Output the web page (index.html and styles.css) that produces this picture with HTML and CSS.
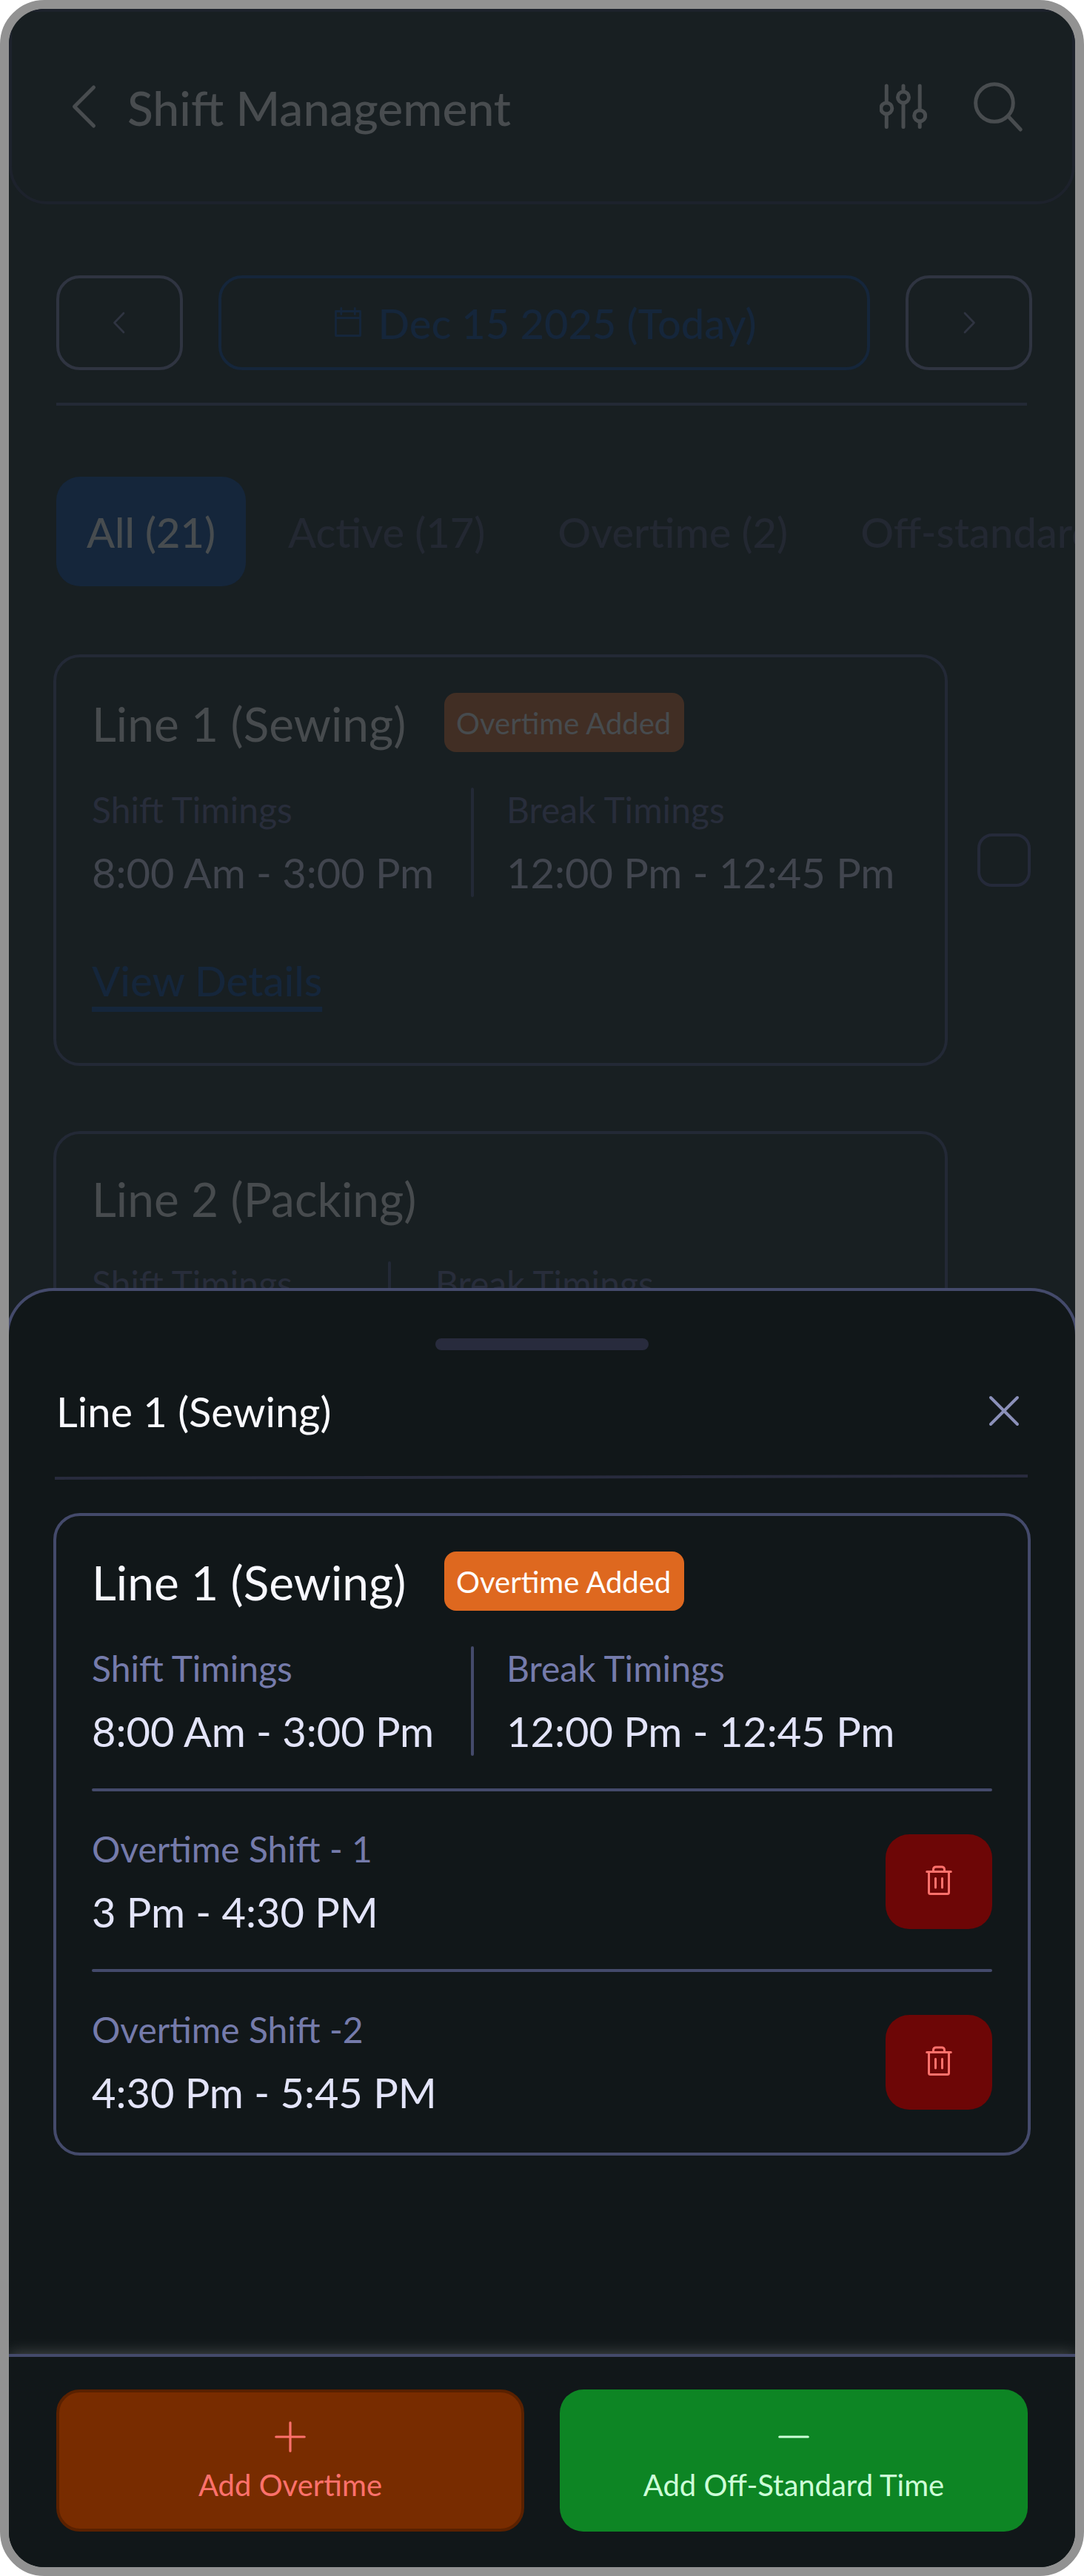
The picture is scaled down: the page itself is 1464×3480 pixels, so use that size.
FILE: index.html
```html
<!DOCTYPE html>
<html lang="en">
<head>
<meta charset="utf-8">
<title>Shift Management</title>
<link rel="stylesheet" href="styles.css">
</head>
<body>
<div class="phone">
  <header class="header">
    <svg class="back" viewBox="0 0 64 64"><path d="M44.5 6 18.5 32 44.5 58"/></svg>
    <h1 class="t64 header-title">Shift Management</h1>
    <svg class="filters" viewBox="0 0 64 64">
      <path d="M9.3 4v21M9.3 42v17.500M32 4v5.500M32 27v32.500M54.200 4v31M54.200 52v7.500"/>
      <circle cx="9.300" cy="34.400" r="7.500"/><circle cx="32" cy="19.400" r="7.500"/><circle cx="54.200" cy="44.400" r="7.500"/>
    </svg>
    <svg class="search" viewBox="0 0 72 72"><circle cx="31" cy="31" r="25.300"/><path d="M49.500 49 66.300 67"/></svg>
  </header>

  <main class="main">
    <div class="dates">
      <button class="step"><svg viewBox="0 0 32 32"><path d="M21 3 8.500 16 21 29"/></svg></button>
      <button class="today">
        <svg viewBox="0 0 40 44"><path d="M2.500 6.500h33v33h-33zM2.500 15.500h33M9.800 2.500v8M28.300 2.500v8"/></svg>
        <span class="t56">Dec 15 2025 (Today)</span>
      </button>
      <button class="step"><svg viewBox="0 0 32 32"><path d="M10 3 22.500 16 10 29"/></svg></button>
    </div>
    <hr class="rule">
    <nav class="tabs">
      <a class="tab tab-on"><span class="t56">All (21)</span></a>
      <a class="tab"><span class="t56">Active (17)</span></a>
      <a class="tab"><span class="t56">Overtime (2)</span></a>
      <a class="tab"><span class="t56">Off-standard (2)</span></a>
    </nav>
    <div class="list">
      <div class="line">
        <section class="card card-dim">
          <div class="card-head"><h2 class="t64">Line 1 (Sewing)</h2><span class="badge"><span class="t40">Overtime Added</span></span></div>
          <div class="times">
            <div class="slot"><span class="label t48">Shift Timings</span><span class="value t56">8:00 Am - 3:00 Pm</span></div>
            <i class="bar"></i>
            <div class="slot"><span class="label t48">Break Timings</span><span class="value t56">12:00 Pm - 12:45 Pm</span></div>
          </div>
          <a class="details"><span class="t56">View Details</span></a>
        </section>
        <i class="check"></i>
      </div>
      <div class="line">
        <section class="card card-dim">
          <div class="card-head"><h2 class="t64">Line 2 (Packing)</h2></div>
          <div class="times times-short">
            <div class="slot"><span class="label t48">Shift Timings</span></div>
            <i class="bar"></i>
            <div class="slot"><span class="label t48">Break Timings</span></div>
          </div>
        </section>
      </div>
    </div>
  </main>

  <div class="sheet">
    <i class="handle"></i>
    <div class="sheet-head">
      <h2 class="t56">Line 1 (Sewing)</h2>
      <svg class="close" viewBox="0 0 48 48"><path d="M6 6 42 42M42 6 6 42"/></svg>
    </div>
    <svg class="sheet-rule" viewBox="0 0 1314 8"><path d="M0 5 1314 2"/></svg>
    <section class="card">
      <div class="card-head"><h2 class="t64">Line 1 (Sewing)</h2><span class="badge"><span class="t40">Overtime Added</span></span></div>
      <div class="times">
        <div class="slot"><span class="label t48">Shift Timings</span><span class="value t56">8:00 Am - 3:00 Pm</span></div>
        <i class="bar"></i>
        <div class="slot"><span class="label t48">Break Timings</span><span class="value t56">12:00 Pm - 12:45 Pm</span></div>
      </div>
      <hr class="split">
      <div class="overtime">
        <div class="slot"><span class="label t48">Overtime Shift - 1</span><span class="value t56">3 Pm - 4:30 PM</span></div>
        <button class="trash"><svg viewBox="0 0 48 48"><path d="M7.700 10.400h32.600M10.500 10.400v28a2 2 0 0 0 2 2h23a2 2 0 0 0 2-2v-28M16.500 10.400v-3a3.500 3.500 0 0 1 3.500-3.500h8a3.500 3.500 0 0 1 3.500 3.500v3M19.500 19.400v12.500M28.500 19.400v12.500"/></svg></button>
      </div>
      <hr class="split">
      <div class="overtime">
        <div class="slot"><span class="label t48">Overtime Shift -2</span><span class="value t56">4:30 Pm - 5:45 PM</span></div>
        <button class="trash"><svg viewBox="0 0 48 48"><path d="M7.700 10.400h32.600M10.500 10.400v28a2 2 0 0 0 2 2h23a2 2 0 0 0 2-2v-28M16.500 10.400v-3a3.500 3.500 0 0 1 3.500-3.500h8a3.500 3.500 0 0 1 3.500 3.500v3M19.500 19.400v12.500M28.500 19.400v12.500"/></svg></button>
      </div>
    </section>
    <footer class="actions">
      <button class="action action-over"><svg viewBox="0 0 48 48"><path d="M4.800 24h38.400M24 4.800v38.400"/></svg><span class="t40">Add Overtime</span></button>
      <button class="action action-off"><svg viewBox="0 0 48 48"><path d="M4.800 24h38.400"/></svg><span class="t40">Add Off-Standard Time</span></button>
    </footer>
  </div>
</div>
</body>
</html>
```
FILE: styles.css
```css
* { box-sizing: border-box; }
body { margin: 0; background: #fff; font-family: Lato, "Liberation Sans", sans-serif; }
h1, h2 { margin: 0; font-weight: 400; }
hr { margin: 0; border: 0; }
button { margin: 0; padding: 0; border: 0; background: none; color: inherit; font: inherit; }
svg { display: block; flex: none; fill: none; stroke: currentColor; stroke-linecap: round; stroke-linejoin: round; }

/* type sizes: the negative margins keep each line box on the 4px grid */
.t64, .t56, .t48, .t40 { display: block; white-space: nowrap; }
.t64 { font-size: 64px; line-height: 79px; margin-bottom: -3px; }
.t56 { font-size: 56px; line-height: 69px; margin-bottom: -1px; }
.t48 { font-size: 48px; line-height: 59px; margin-bottom: 1px; }
.t40 { font-size: 40px; line-height: 50px; margin-bottom: -2px; }

.phone {
  position: relative;
  width: 1464px;
  height: 3480px;
  border: 12px solid #929292;
  border-radius: 60px;
  background: #181f22;
  overflow: hidden;
}

.header {
  display: flex;
  align-items: center;
  height: 264px;
  padding: 0 64px 0 66px;
  border: 4px solid #1d222c;
  border-radius: 0 0 52px 52px;
  color: #484c4f;
}
.header-title { font-size: 64.2px; font-weight: 500; margin-left: 26px; margin-right: auto; }
.back { width: 64px; height: 64px; stroke-width: 5; }
.filters { width: 64px; height: 64px; stroke-width: 5; margin-right: 60px; }
.search { width: 72px; height: 72px; stroke-width: 5; }

.main { padding: 96px 0 0 64px; }
.dates { display: flex; gap: 48px; }
.step, .today {
  display: flex;
  align-items: center;
  justify-content: center;
  height: 128px;
  border: 4px solid #2f3441;
  border-radius: 32px;
  color: #2f3441;
}
.step { width: 171px; }
.step svg { width: 32px; height: 32px; stroke-width: 2.7; }
.today { width: 880px; gap: 20px; padding-left: 2px; border-color: #15263b; color: #15263b; font-weight: 500; }
.today svg { width: 40px; height: 44px; stroke-width: 2.8; }
.rule { width: 1311px; height: 4px; margin-top: 44px; background: #232936; }

.tabs { display: flex; gap: 16px; margin-top: 96px; font-weight: 500; }
.tab { display: flex; align-items: center; height: 148px; padding: 0 41px; border-radius: 32px; color: #232832; }
.tab-on { background: #15263b; color: #474c4f; }

.list { display: flex; flex-direction: column; gap: 88px; margin: 92px 0 0 -4px; }
.line { display: flex; align-items: center; gap: 40px; }
.check { width: 72px; height: 72px; border: 4px solid #252a3a; border-radius: 20px; }

.card {
  display: flex;
  flex-direction: column;
  gap: 48px;
  padding: 48px;
  border: 4px solid #444a6b;
  border-radius: 36px;
  color: #f8f8ff;
}
.card-head { display: flex; align-items: center; }
.card-head .t64 { width: 476px; }
.badge { width: 324px; height: 80px; padding: 16px; border-radius: 16px; background: #de681f; color: #fff; }
.times { display: flex; }
.times .slot:first-child { width: 512px; }
.slot { display: flex; flex-direction: column; gap: 20px; }
.label { color: #757bab; }
.value { color: #e3e4f9; }
.bar { width: 4px; height: 148px; margin-right: 44px; border-radius: 2px; background: #444a6b; }
.times-short .slot:first-child { width: 400px; }
.times-short .bar { margin-right: 60px; }

.card-dim { width: 1208px; border-color: #232936; color: #474b4e; }
.card-dim .badge { background: #412e24; color: #474b4e; }
.card-dim .label { color: #282d3b; }
.card-dim .value { color: #41454e; }
.card-dim .bar { background: #232936; }
.details {
  display: flex;
  align-items: center;
  height: 128px;
  color: #15263b;
  font-weight: 500;
}
.details .t56 { font-size: 56.300px; text-decoration: underline; text-decoration-thickness: 7px; text-underline-offset: 14px; }

/* bottom sheet laid over the list */
.sheet {
  position: absolute;
  left: -4px;
  right: -4px;
  bottom: 0;
  height: 1728px;
  display: flex;
  flex-direction: column;
  border: 4px solid #444a6b;
  border-bottom: 0;
  border-radius: 64px 64px 0 0;
  background: #111719;
}
.handle { width: 288px; height: 16px; margin: 64px auto 0; border-radius: 8px; background: #282b3d; }
.sheet-head {
  display: flex;
  align-items: center;
  justify-content: space-between;
  height: 68px;
  margin: 48px 72px 0 64px;
  color: #fafaff;
}
.close { width: 48px; height: 48px; color: #8b90b9; stroke-width: 4; }
.sheet-rule { width: 1314px; height: 8px; margin: 52px 0 0 62px; color: #282b3d; stroke-width: 4; stroke-linecap: butt; }
.sheet > .card { margin: 44px 60px 0; }
.split { height: 4px; margin-top: -4px; border-radius: 2px; background: #444a6b; }
.overtime { display: flex; align-items: center; justify-content: space-between; }
.trash {
  display: flex;
  align-items: center;
  justify-content: center;
  width: 144px;
  height: 128px;
  border-radius: 32px;
  background: #6d0606;
  color: #ff716c;
}
.trash svg { width: 48px; height: 48px; stroke-width: 3; }

.actions {
  display: flex;
  gap: 48px;
  height: 288px;
  margin-top: auto;
  padding: 44px 64px 48px;
  border-top: 4px solid #444a6b;
  background: #111719;
  box-shadow: 0 0 20px rgba(255, 255, 255, .25);
}
.action {
  display: flex;
  flex-direction: column;
  align-items: center;
  justify-content: center;
  gap: 16px;
  width: 632px;
  border-radius: 32px;
}
.action svg { width: 48px; height: 48px; stroke-width: 3.2; }
.action-over { border: 4px solid #5a2100; background: #782c00; color: #ff716c; }
.action-off { background: #0d8524; color: #cdffd8; }
```
